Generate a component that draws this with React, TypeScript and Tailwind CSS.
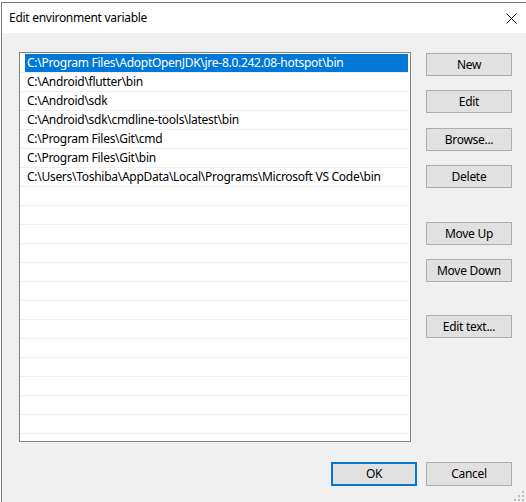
import React from "react";

const paths = [
  "C:\\Program Files\\AdoptOpenJDK\\jre-8.0.242.08-hotspot\\bin",
  "C:\\Android\\flutter\\bin",
  "C:\\Android\\sdk",
  "C:\\Android\\sdk\\cmdline-tools\\latest\\bin",
  "C:\\Program Files\\Git\\cmd",
  "C:\\Program Files\\Git\\bin",
  "C:\\Users\\Toshiba\\AppData\\Local\\Programs\\Microsoft VS Code\\bin",
];

function Btn({ label, className = "" }: { label: string; className?: string }) {
  return (
    <div
      className={`w-[86px] h-[23px] bg-[#e1e1e1] border border-[#adadad] flex items-center justify-center text-[12px] text-black ${className}`}
    >
      {label}
    </div>
  );
}

export default function App() {
  const rows = Array.from({ length: 22 }, (_, i) => paths[i] ?? "");
  return (
    <div className="w-[526px] h-[502px] bg-white pt-[2px] pl-[1px] overflow-hidden font-['Noto_Sans',sans-serif] leading-none tracking-[-0.28px]">
      <div className="h-[500px] border-t border-l border-[#7a7a7a] flex flex-col">
        <div className="h-[30px] bg-white flex items-center justify-between pl-[7px] pr-[9px] text-[12px] text-black">
          <span>Edit environment variable</span>
          <svg width="11" height="11" viewBox="0 0 11 11">
            <path d="M0.5 0.5 L10.5 10.5 M10.5 0.5 L0.5 10.5" stroke="#000" strokeWidth="1" />
          </svg>
        </div>
        <div className="flex-1 bg-[#f0f0f0] relative pt-[19px] pl-[17px] pr-[14px]">
          <div className="flex">
            <div className="w-[392px] h-[390px] border border-[#828282] bg-white overflow-hidden pt-[1px] pr-[2px]">
              {rows.map((p, i) => (
                <div key={i} className="h-[19px] border-b border-[#f0f0f0] flex">
                  <div
                    className={`ml-[5px] flex-1 h-[18px] flex items-center pl-[2px] text-[12px] whitespace-nowrap ${
                      i === 0 ? "bg-[#0078d7] text-white" : "text-black"
                    }`}
                  >
                    {p}
                  </div>
                </div>
              ))}
            </div>
            <div className="ml-[15px] pt-[1px] flex flex-col">
              <Btn label="New" />
              <Btn label="Edit" className="mt-[14px]" />
              <Btn label="Browse..." className="mt-[15px]" />
              <Btn label="Delete" className="mt-[14px]" />
              <Btn label="Move Up" className="mt-[34px]" />
              <Btn label="Move Down" className="mt-[14px]" />
              <Btn label="Edit text..." className="mt-[33px]" />
            </div>
          </div>
          <div className="flex justify-end mt-[20px] gap-[9px]">
            <div className="w-[86px] h-[24px] bg-[#e1e1e1] border-2 border-[#0078d7] flex items-center justify-center text-[12px] text-black">
              OK
            </div>
            <div className="w-[86px] h-[24px] bg-[#e1e1e1] border border-[#adadad] flex items-center justify-center text-[12px] text-black">
              Cancel
            </div>
          </div>
          <svg className="absolute right-[2px] bottom-[1px]" width="10" height="10" viewBox="0 0 10 10">
            <rect x="8" y="0" width="2" height="2" fill="#bcbcbc" />
            <rect x="4" y="4" width="2" height="2" fill="#bcbcbc" />
            <rect x="8" y="4" width="2" height="2" fill="#bcbcbc" />
            <rect x="0" y="8" width="2" height="2" fill="#bcbcbc" />
            <rect x="4" y="8" width="2" height="2" fill="#bcbcbc" />
            <rect x="8" y="8" width="2" height="2" fill="#bcbcbc" />
          </svg>
        </div>
      </div>
    </div>
  );
}
